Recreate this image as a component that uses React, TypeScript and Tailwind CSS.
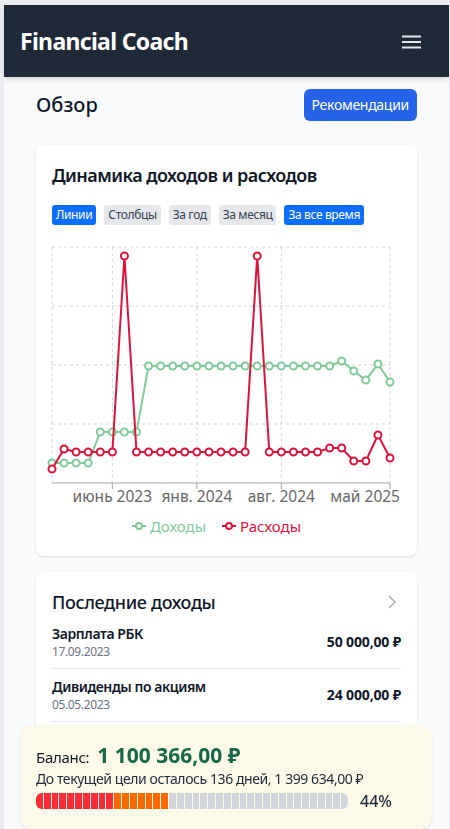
import React from 'react';

const font = { fontFamily: '"Noto Sans", "Open Sans", sans-serif' };

// chart geometry (pixels inside the svg)
const W = 338;
const step = W / 28;
const gridY = [14, 73, 132, 191];
const gridX = [0, 5 * step, 12 * step, 19 * step, W];

const expenses = [
  236, 216, 219, 219, 219, 219, 23, 219, 219, 219, 219, 219, 219, 219, 219,
  219, 219, 23, 219, 219, 219, 219, 219, 215, 215, 228, 228, 202, 225,
];
const income = [
  230, 230, 230, 230, 199, 199, 199, 199, 133, 133, 133, 133, 133, 133, 133,
  133, 133, 133, 133, 133, 133, 133, 133, 133, 128, 138, 147, 131, 149,
];

const tags = [
  { label: 'Линии', active: true },
  { label: 'Столбцы', active: false },
  { label: 'За год', active: false },
  { label: 'За месяц', active: false },
  { label: 'За все время', active: true },
];

const incomes = [
  { title: 'Зарплата РБК', date: '17.09.2023', amount: '50 000,00 ₽' },
  { title: 'Дивиденды по акциям', date: '05.05.2023', amount: '24 000,00 ₽' },
];

const Series = ({ data, color }: { data: number[]; color: string }) => (
  <g>
    <polyline
      points={data.map((y, i) => `${i * step},${y}`).join(' ')}
      fill="none"
      stroke={color}
      strokeWidth={2}
    />
    {data.map((y, i) => (
      <circle key={i} cx={i * step} cy={y} r={3.5} fill="#fff" stroke={color} strokeWidth={2} />
    ))}
  </g>
);

const Chart = () => (
  <svg width={348} height={280} viewBox="0 0 348 280" className="mt-2 block overflow-visible">
    {gridY.map((y) => (
      <line key={y} x1={0} x2={W} y1={y} y2={y} stroke="#d4d4d4" strokeDasharray="3 3" />
    ))}
    {gridX.map((x) => (
      <line key={x} x1={x} x2={x} y1={14} y2={250} stroke="#d4d4d4" strokeDasharray="3 3" />
    ))}
    <line x1={0} x2={W} y1={250} y2={250} stroke="#a3a3a3" />
    {gridX.slice(1).map((x) => (
      <line key={x} x1={x} x2={x} y1={250} y2={256} stroke="#a3a3a3" />
    ))}
    <Series data={income} color="#82ca9d" />
    <Series data={expenses} color="#dc143c" />
    <g fontSize={15.5} fill="#666">
      <text x={gridX[1]} y={269} textAnchor="middle">июнь 2023</text>
      <text x={gridX[2]} y={269} textAnchor="middle">янв. 2024</text>
      <text x={gridX[3]} y={269} textAnchor="middle">авг. 2024</text>
      <text x={348} y={269} textAnchor="end">май 2025</text>
    </g>
  </svg>
);

const LegendIcon = ({ color }: { color: string }) => (
  <svg width={14} height={10} viewBox="0 0 14 10">
    <line x1={0} x2={14} y1={5} y2={5} stroke={color} strokeWidth={2} />
    <circle cx={7} cy={5} r={3} fill="#fff" stroke={color} strokeWidth={2} />
  </svg>
);

export default function App() {
  const segments = Array.from({ length: 40 }, (_, i) =>
    i < 10 ? 'bg-red-500' : i < 17 ? 'bg-orange-500' : 'bg-gray-300'
  );

  return (
    <div className="min-h-screen bg-[#e9ecf1] pl-1 pr-px pt-[5px]" style={font}>
      <div className="min-h-[824px] bg-[#f8fafc]">
        <header className="flex h-[72px] items-center justify-between bg-[#1f2937] pl-4 pr-7 shadow-md">
          <h1 className="text-[23px] font-bold tracking-[-0.03em] text-white">Financial Coach</h1>
          <svg width={19} height={14} viewBox="0 0 19 14" className="mt-px">
            <path d="M0 1.5h19M0 7h19M0 12.5h19" stroke="#e5e7eb" strokeWidth={1.8} />
          </svg>
        </header>

        <main className="px-8 pb-40 pt-3">
          <div className="mb-6 flex items-center justify-between">
            <h2 className="text-xl font-medium text-gray-900">Обзор</h2>
            <button className="h-8 rounded-md bg-[#2563eb] px-2 text-sm tracking-[-0.02em] text-white">
              Рекомендации
            </button>
          </div>

          <section className="rounded-lg bg-white px-4 pb-5 pt-4 shadow">
            <h3 className="text-lg font-semibold tracking-[-0.03em] text-gray-900">Динамика доходов и расходов</h3>
            <div className="mt-4 flex gap-2">
              {tags.map((t) => (
                <span
                  key={t.label}
                  className={
                    t.active
                      ? 'h-5 rounded-[3px] bg-[#0d6efd] px-1 text-xs leading-5 tracking-[-0.03em] text-white'
                      : 'h-5 rounded-[3px] bg-gray-200 px-1 text-xs leading-5 tracking-[-0.03em] text-gray-700'
                  }
                >
                  {t.label}
                </span>
              ))}
            </div>
            <Chart />
            <div className="mt-[3px] flex items-center justify-center gap-1 pr-5 text-[15px] leading-5">
              <LegendIcon color="#82ca9d" />
              <span className="mr-3 text-[#82ca9d]">Доходы</span>
              <LegendIcon color="#dc143c" />
              <span className="text-[#dc143c]">Расходы</span>
            </div>
          </section>

          <section className="mt-4 rounded-lg bg-white px-4 pb-6 pt-4 shadow">
            <div className="flex items-center justify-between">
              <h3 className="text-lg font-medium tracking-[-0.02em] text-gray-900">Последние доходы</h3>
              <svg width={10} height={14} viewBox="0 0 10 14" className="mr-1">
                <path d="M2 1l6 6-6 6" fill="none" stroke="#9ca3af" strokeWidth={1.3} />
              </svg>
            </div>
            {incomes.map((r) => (
              <div key={r.title} className="flex items-center justify-between border-b border-gray-200 py-2">
                <div>
                  <div className="text-sm font-semibold tracking-[-0.03em] text-gray-900">{r.title}</div>
                  <div className="text-xs tracking-[-0.03em] text-gray-500">{r.date}</div>
                </div>
                <div className="text-sm font-bold tracking-[-0.01em] text-gray-900">{r.amount}</div>
              </div>
            ))}
          </section>
        </main>
      </div>

      <div className="fixed bottom-0 left-5 right-[18px] h-[104px] rounded-xl bg-[#fdf9e9] px-4 pt-4 shadow-sm">
        <div className="flex h-7 items-baseline gap-2 leading-7">
          <span className="text-[15px] tracking-[-0.02em] text-gray-900">Баланс:</span>
          <span className="text-[21px] font-bold text-[#15694a]">1 100 366,00 ₽</span>
        </div>
        <div className="text-sm leading-5 tracking-[-0.03em] text-gray-800">
          До текущей цели осталось 136 дней, 1 399 634,00 ₽
        </div>
        <div className="mt-1 flex items-center gap-3">
          <div className="flex h-4 flex-1 gap-px overflow-hidden rounded-md">
            {segments.map((c, i) => (
              <div key={i} className={`flex-1 ${c}`} />
            ))}
          </div>
          <span className="w-14 text-base font-medium leading-4 text-gray-800">44%</span>
        </div>
      </div>
    </div>
  );
}
